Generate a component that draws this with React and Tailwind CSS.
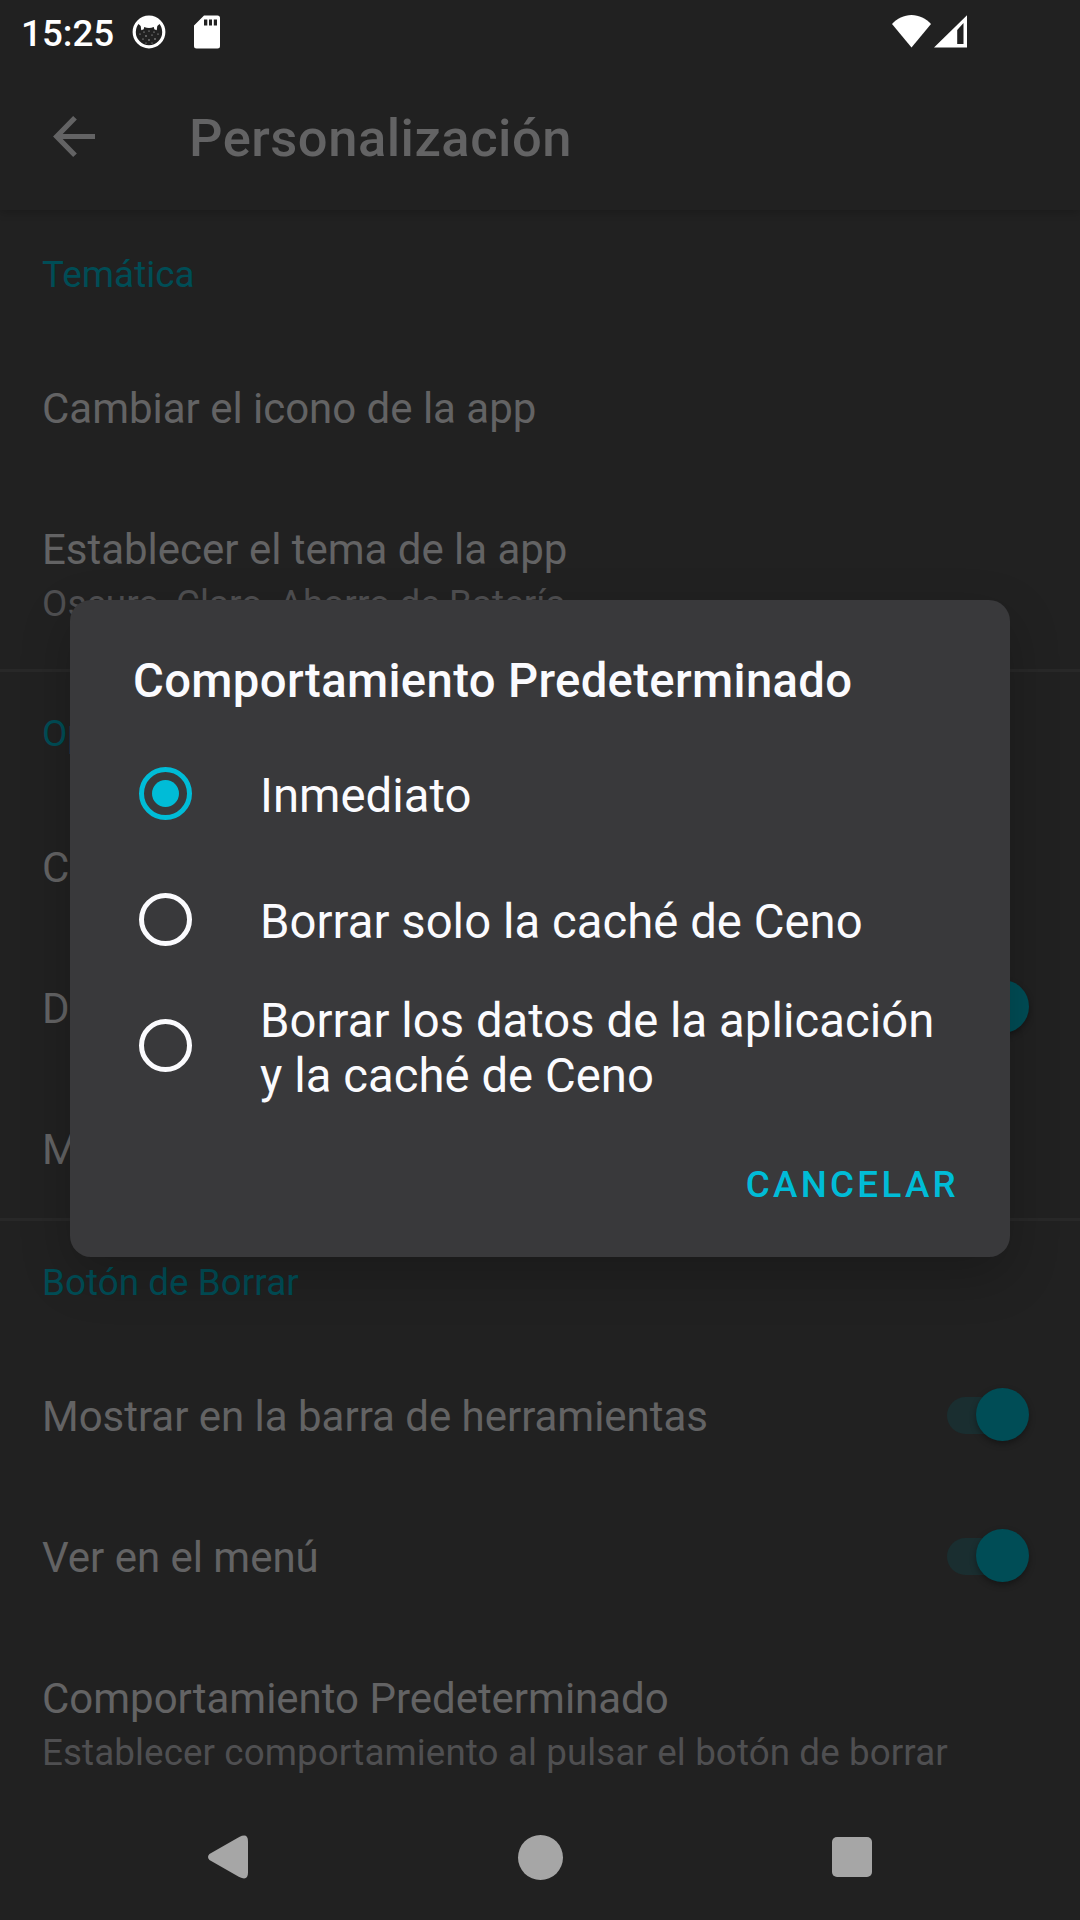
const items = {
  theme: [
    { title: "Cambiar el icono de la app" },
    { title: "Establecer el tema de la app", summary: "Oscuro, Claro, Ahorro de Batería" },
  ],
  options: [
    { title: "Cambiar" },
    { title: "Datos", on: true },
    { title: "Mostrar" },
  ],
  clear: [
    { title: "Mostrar en la barra de herramientas", on: true },
    { title: "Ver en el menú", on: true },
    { title: "Comportamiento Predeterminado", summary: "Establecer comportamiento al pulsar el botón de borrar" },
  ],
};

function StatusBar() {
  return (
    <div className="relative z-10 flex h-[63px] shrink-0 items-center bg-[#212121] text-white">
      <span className="relative top-[2px] ml-[21px] w-[94px] whitespace-nowrap text-[36.75px] leading-[63px] font-medium">15:25</span>
      <svg className="ml-[17px] h-[34px] w-[34px]" viewBox="0 0 34 34">
        <circle cx="17" cy="17" r="14.800" fill="#212121" stroke="white" strokeWidth="3.200" />
        <path d="M6 8.500C9 3 13 2 17 2C21 2 25 3 28 8.500L25.300 11L24.700 15.300L22.300 14.300L21.800 12Q17 14 12.200 12L11.700 14.300L9.300 15.300L8.700 11Z" fill="white" />
        <g fill="#ccc">
          <circle cx="12" cy="17" r=".6" /><circle cx="17" cy="16" r=".6" /><circle cx="22" cy="17" r=".6" />
          <circle cx="8" cy="19" r=".6" /><circle cx="14" cy="21" r=".7" /><circle cx="20" cy="20" r=".6" />
          <circle cx="26" cy="19" r=".6" /><circle cx="11" cy="24" r=".6" /><circle cx="17" cy="25" r=".7" />
          <circle cx="23" cy="24" r=".7" /><circle cx="14" cy="28" r=".5" /><circle cx="20" cy="28" r=".5" />
        </g>
      </svg>
      <svg className="ml-[28px] h-[34px] w-[26px]" viewBox="0 0 26 34">
        <path d="M10 0.5H23.5A2.5 2.5 0 0 1 26 3V31A2.5 2.5 0 0 1 23.500 33.500H2.500A2.500 2.500 0 0 1 0 31V10.500Z" fill="white" />
        <path d="M10 4.500h3.300v6H10zM15 4.500h3v6h-3zM19.800 4.500h3.200v6h-3.200z" fill="#212121" />
      </svg>
      <svg className="mr-[112px] ml-auto h-[34px] w-[76px]" viewBox="0 0 76 34">
        <path d="M0 9C5 3.500 12 0 19.500 0C27 0 34 3.500 39 9L19.500 32.500Z" fill="white" />
        <path fillRule="evenodd" d="M42 32.500L75 0.300V32.500ZM65.200 15V29H71.500V8Z" fill="white" />
      </svg>
    </div>
  );
}

function Toggle() {
  return (
    <span className="relative flex h-[54px] w-[82px] shrink-0 items-center">
      <span className="h-[37px] w-[66px] rounded-full bg-[#1a2e30]" />
      <span className="absolute right-0 top-0 h-[53px] w-[53px] rounded-full bg-[#004d56] shadow-[0_3px_6px_rgba(0,0,0,0.35)]" />
    </span>
  );
}

function Row({ title, summary, on }) {
  return (
    <div className={summary ? "flex h-[190px] shrink-0 items-start pl-[42px] pr-[51px]" : "flex h-[141px] shrink-0 items-start pl-[42px] pr-[51px]"}>
      <div className="min-w-0 flex-1 whitespace-nowrap pt-[42px]">
        <div className="text-[42px] leading-[57px] tracking-[-0.02px] text-[#636364]">{title}</div>
        {summary && <div className="relative top-px text-[36.75px] leading-[49px] tracking-[0.1px] text-[#4f4f51]">{summary}</div>}
      </div>
      {on && <div className="pt-[42px]"><Toggle /></div>}
    </div>
  );
}

function Section({ name, rows, divided }) {
  return (
    <section className="flex shrink-0 flex-col">
      <div className={divided ? "h-[128px] border-t-[3px] border-[#282828] pl-[42px] pt-[37px]" : "h-[128px] pl-[42px] pt-[40px]"}>
        <h2 className="text-[36.75px] leading-[49px] tracking-[0.07px] text-[#004d56]">{name}</h2>
      </div>
      {rows.map((row) => <Row key={row.title} {...row} />)}
    </section>
  );
}

function Option({ lines, selected }) {
  return (
    <label className="flex h-[126px] items-center">
      <span className={selected ? "relative -top-[0.5px] flex h-[53px] w-[53px] shrink-0 items-center justify-center rounded-full border-[5px] border-[#00bcd7]" : "relative -top-[0.5px] h-[53px] w-[53px] shrink-0 rounded-full border-[5px] border-[#fbfbfe]"}>
        {selected && <span className="h-[27px] w-[27px] rounded-full bg-[#00bcd7]" />}
      </span>
      <span className={lines.length > 1 ? "relative top-[3px] ml-[68px] whitespace-nowrap text-[47.25px] leading-[55px] tracking-[0.04px] text-[#fbfbfe]" : "relative top-[2px] ml-[68px] whitespace-nowrap text-[47.25px] leading-[55px] tracking-[0.04px] text-[#fbfbfe]"}>
        {lines.map((line) => <span key={line} className="block">{line}</span>)}
      </span>
    </label>
  );
}

function Dialog() {
  return (
    <div className="absolute left-[70px] top-[600px] flex h-[657px] w-[940px] flex-col rounded-[21px] bg-[#39393b] shadow-[0_18px_50px_rgba(0,0,0,0.22)]">
      <h1 className="ml-[63px] mt-[53px] h-[78px] whitespace-nowrap text-[47.25px] leading-[56px] font-medium tracking-[0.34px] text-[#fbfbfe]">Comportamiento Predeterminado</h1>
      <div className="ml-[69px]">
        <Option selected lines={["Inmediato"]} />
        <Option lines={["Borrar solo la caché de Ceno"]} />
        <Option lines={["Borrar los datos de la aplicación", "y la caché de Ceno"]} />
      </div>
      <button className="mr-[51px] mt-[51px] self-end text-[36.75px] leading-[49px] font-medium tracking-[3.3px] text-[#00bcd7]">CANCELAR</button>
    </div>
  );
}

function NavBar() {
  return (
    <nav className="absolute bottom-0 left-0 flex h-[126px] w-full items-center justify-between bg-[#212121] pr-[208px] pl-[208px]">
      <svg className="h-[46px] w-[40px]" viewBox="0 0 41 46">
        <path d="M1.500 20L32 2.500Q41 -2 41 7V39Q41 48 32 43.500L1.500 26Q-1.500 23 1.500 20Z" fill="#a6a6a6" />
      </svg>
      <span className="h-[45px] w-[45px] rounded-full bg-[#a6a6a6]" />
      <span className="h-[40px] w-[40px] rounded-[5px] bg-[#a6a6a6]" />
    </nav>
  );
}

export default function App() {
  return (
    <main className="relative flex h-[1920px] w-[1080px] flex-col overflow-hidden bg-[#212121] font-['Roboto',sans-serif]">
      <StatusBar />
      <header className="flex h-[147px] shrink-0 items-center shadow-[0_3px_8px_rgba(0,0,0,0.18)]">
        <svg className="ml-[53px] h-[42px] w-[42px]" viewBox="0 0 42 42" fill="none" stroke="#636364" strokeWidth="5.200">
          <path d="M22 1.800L3.700 20.500L22 39.200M3.500 20.500H42" />
        </svg>
        <h1 className="relative top-px ml-[94px] text-[52.5px] leading-[64px] font-medium tracking-[0.5px] text-[#636364]">Personalización</h1>
      </header>
      <Section name="Temática" rows={items.theme} />
      <div className="-mb-[2px] shrink-0">
        <Section name="Opciones" rows={items.options} divided />
      </div>
      <Section name="Botón de Borrar" rows={items.clear} divided />
      <Dialog />
      <NavBar />
    </main>
  );
}
